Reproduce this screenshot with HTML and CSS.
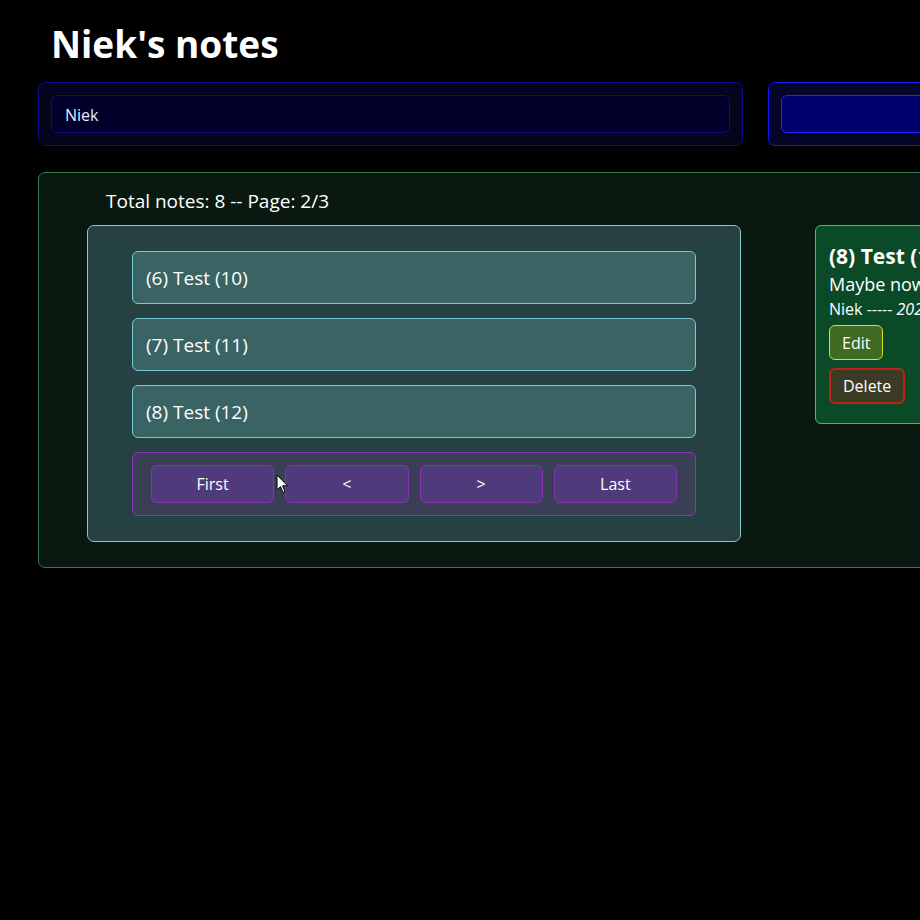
FILE: index.html
```html
<!DOCTYPE html>
<html lang="en">
<head>
<meta charset="utf-8">
<title>Niek's notes</title>
<link rel="stylesheet" href="styles.css">
</head>
<body>
<div class="page">
  <h1 class="title">Niek's notes</h1>
  <div class="inputs">
    <div class="panel panel-dim"><div class="field field-dim">Niek</div></div>
    <div class="panel panel-bright"><div class="field field-bright"></div></div>
  </div>
  <section class="notes">
    <div class="summary">Total notes: 8 -- Page: 2/3</div>
    <div class="notes-row">
      <div class="list">
        <div class="item">(6) Test (10)</div>
        <div class="item">(7) Test (11)</div>
        <div class="item">(8) Test (12)</div>
        <div class="pager">
          <button class="pbtn">First</button>
          <button class="pbtn">&lt;</button>
          <button class="pbtn">&gt;</button>
          <button class="pbtn">Last</button>
        </div>
      </div>
      <div class="card">
        <div class="card-title">(8) Test (12)</div>
        <div class="card-body">Maybe now it will work</div>
        <div class="card-meta">Niek ----- <i>2023-05-12</i></div>
        <button class="btn btn-edit">Edit</button>
        <button class="btn btn-delete">Delete</button>
      </div>
    </div>
  </section>
</div>
<svg class="cursor" width="13" height="20" viewBox="0 0 13 20"><path d="M1 1 L1 16 L4.5 12.5 L7 18.5 L9 17.6 L6.6 11.8 L11.5 11.8 Z" fill="#fff" stroke="#000" stroke-width="1"/></svg>
</body>
</html>
```
FILE: styles.css
```css
*, *::before, *::after { box-sizing: border-box; }
html { overflow: hidden; }
body {
  margin: 0;
  background: #000;
  color: #fff;
  font-family: "Open Sans", "Noto Sans", sans-serif;
}
.page {
  padding-left: 38px;
  width: 1500px;
}
.title {
  margin: 0;
  padding: 19px 0 0 13px;
  font-size: 37px;
  line-height: 50px;
  font-weight: 700;
}
.inputs {
  display: grid;
  grid-template-columns: 705px 705px;
  gap: 25px;
  margin-top: 13px;
}
.panel {
  border-radius: 7px;
  padding: 12px;
}
.panel-dim {
  background: #04041a;
  border: 1px solid #0b0b8c;
}
.panel-bright {
  background: #05052a;
  border: 1px solid #1414ff;
}
.field {
  height: 38px;
  border-radius: 6px;
  padding: 1px 13px 0;
  font-size: 16px;
  line-height: 36px;
}
.field-dim {
  background: #00002a;
  border: 1px solid #0d0d80;
  color: #e8eaff;
}
.field-bright {
  background: #00006c;
  border: 1px solid #2424ff;
}
.notes {
  margin-top: 26px;
  width: 1200px;
  background: #0a1910;
  border: 1px solid #2f7d4e;
  border-radius: 7px;
  padding: 16px 0 25px 48px;
}
.summary {
  margin-left: 19px;
  font-size: 19px;
  line-height: 25px;
}
.notes-row {
  display: flex;
  align-items: flex-start;
  gap: 74px;
  margin-top: 11px;
}
.list {
  width: 654px;
  flex-shrink: 0;
  background: #254141;
  border: 1px solid #86c6cf;
  border-radius: 7px;
  padding: 25px 44px;
  display: flex;
  flex-direction: column;
  gap: 14px;
}
.item {
  height: 53px;
  background: #3a6464;
  border: 1px solid #7cc6df;
  border-radius: 6px;
  padding: 2px 13px 0;
  font-size: 19px;
  line-height: 49px;
}
.pager {
  background: #3b3f55;
  border: 1px solid #9530c4;
  border-radius: 6px;
  padding: 12px 18px;
  display: flex;
  gap: 11px;
}
.pbtn {
  flex: 1;
  height: 38px;
  background: #4f3b7b;
  border: 1px solid #8432b0;
  border-radius: 6px;
  color: #fff;
  font-family: inherit;
  font-size: 16px;
  padding: 0;
}
.card {
  width: 400px;
  flex-shrink: 0;
  background: #0b4a26;
  border: 1px solid #3ec070;
  border-radius: 6px;
  padding: 16px 13px 19px 13px;
}
.card-title {
  font-size: 21px;
  font-weight: 700;
  line-height: 28px;
}
.card-body {
  font-size: 18px;
  line-height: 28px;
}
.card-meta {
  font-size: 16px;
  line-height: 22px;
}
.btn {
  display: block;
  height: 36px;
  border-radius: 6px;
  color: #fff;
  font-family: inherit;
  font-size: 16px;
  padding: 0 12px;
}
.btn-edit {
  margin-top: 5px;
  height: 35px;
  background: #3e6a22;
  border: 1.5px solid #d8e020;
}
.btn-delete {
  margin-top: 8px;
  background: #3b3a24;
  border: 2px solid #c0201a;
}
.cursor {
  position: absolute;
  left: 276px;
  top: 474px;
}
```
